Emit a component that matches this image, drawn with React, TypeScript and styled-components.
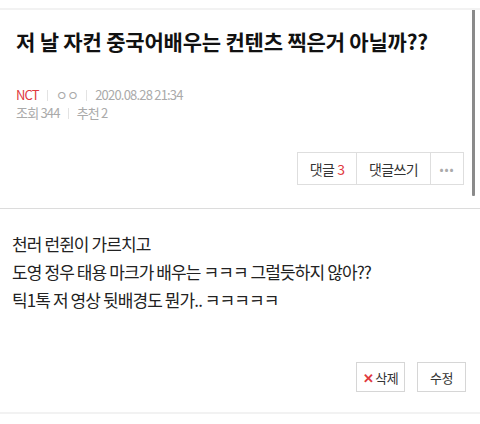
import styled, { createGlobalStyle } from 'styled-components'

const GlobalStyle = createGlobalStyle`
  html, body {
    margin: 0;
    padding: 0;
    background: #fff;
  }
  body {
    font-family: "Noto Sans CJK KR", "Noto Sans", sans-serif;
    color: #222;
  }
`

const Page = styled.div`
  position: relative;
  width: 480px;
  height: 424px;
  overflow: hidden;
  border-top: 2px solid #f2f2f2;
  margin-top: 8px;
  box-sizing: border-box;
`

const Scrollbar = styled.div`
  position: absolute;
  right: 5px;
  top: -8px;
  width: 3px;
  height: 194px;
  background: #8a8a8a;
  border-radius: 1px;
`

const Header = styled.div`
  padding: 16px 16px 0;
  border-bottom: 1px solid #dcdcdc;
  height: 199px;
  box-sizing: border-box;
`

const Title = styled.h1`
  margin: 0;
  font-size: 21px;
  font-weight: 700;
  letter-spacing: -0.2px;
  line-height: 30px;
  color: #111;
`

const Meta = styled.div`
  margin-top: 30px;
  font-size: 13px;
  letter-spacing: -0.8px;
  color: #aaa;
  line-height: 18px;
`

const MetaRow = styled.div`
  display: flex;
  align-items: center;
  height: 18px;
`

const MetaItem = styled.span<{ $red?: boolean }>`
  color: ${p => (p.$red ? '#e0393e' : '#aaa')};
  line-height: 16px;
`

const Sep = styled.span`
  width: 1px;
  height: 11px;
  background: #e3e3e3;
  margin: 0 8px;
`

const Actions = styled.div`
  display: flex;
  justify-content: flex-end;
  margin-top: 30px;
`

const Group = styled.div`
  display: flex;
  border: 1px solid #dedede;
  height: 33px;
  box-sizing: border-box;
`

const GroupBtn = styled.div<{ $w: number }>`
  width: ${p => p.$w}px;
  display: flex;
  align-items: center;
  justify-content: center;
  font-size: 14px;
  letter-spacing: -0.6px;
  color: #333;
  & + & {
    border-left: 1px solid #dedede;
  }
`

const Count = styled.span`
  color: #e0393e;
  margin-left: 3px;
`

const Dots = styled.span`
  color: #aaa;
  font-size: 12px;
  letter-spacing: 1px;
`

const Body = styled.div`
  padding: 21px 12px 0;
  font-size: 17px;
  line-height: 28px;
  letter-spacing: -0.9px;
  color: #222;
  height: 153px;
  box-sizing: border-box;
`

const Footer = styled.div`
  display: flex;
  justify-content: flex-end;
  gap: 12px;
  padding: 0 14px 20px;
  border-bottom: 2px solid #f2f2f2;
`

const SmallBtn = styled.div`
  width: 49px;
  height: 30px;
  box-sizing: border-box;
  border: 1px solid #d6d6d6;
  display: flex;
  align-items: center;
  justify-content: center;
  font-size: 13px;
  letter-spacing: -0.5px;
  color: #333;
  background: #fff;
`

const XMark = styled.span`
  color: #e0393e;
  font-weight: 700;
  font-size: 13px;
  margin-right: 2px;
`

export default function App() {
  return (
    <>
      <GlobalStyle />
      <Page>
        <Scrollbar />
        <Header>
          <Title>저 날 자컨 중국어배우는 컨텐츠 찍은거 아닐까??</Title>
          <Meta>
            <MetaRow>
              <MetaItem $red>NCT</MetaItem>
              <Sep />
              <MetaItem>ㅇㅇ</MetaItem>
              <Sep />
              <MetaItem>2020.08.28 21:34</MetaItem>
            </MetaRow>
            <MetaRow>
              <MetaItem>조회 344</MetaItem>
              <Sep />
              <MetaItem>추천 2</MetaItem>
            </MetaRow>
          </Meta>
          <Actions>
            <Group>
              <GroupBtn $w={58}>
                댓글<Count>3</Count>
              </GroupBtn>
              <GroupBtn $w={73}>댓글쓰기</GroupBtn>
              <GroupBtn $w={32}>
                <Dots>•••</Dots>
              </GroupBtn>
            </Group>
          </Actions>
        </Header>
        <Body>
          천러 런쥔이 가르치고
          <br />
          도영 정우 태용 마크가 배우는 ㅋㅋㅋ 그럴듯하지 않아??
          <br />
          틱1톡 저 영상 뒷배경도 뭔가.. ㅋㅋㅋㅋㅋ
        </Body>
        <Footer>
          <SmallBtn>
            <XMark>✕</XMark>삭제
          </SmallBtn>
          <SmallBtn>수정</SmallBtn>
        </Footer>
      </Page>
    </>
  )
}
